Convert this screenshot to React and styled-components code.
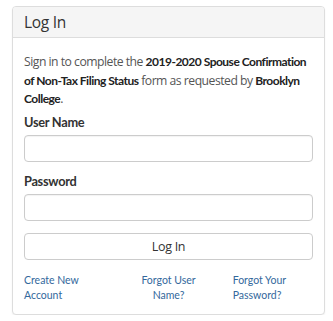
import React from 'react';
import styled, { createGlobalStyle } from 'styled-components';

const GlobalStyle = createGlobalStyle`
  body {
    margin: 0;
    background: #fff;
    font-family: "Open Sans", "Liberation Sans", sans-serif;
    color: #333;
  }
`;

const Page = styled.div`
  padding: 6px 8px 0 12px;
`;

const Panel = styled.section`
  width: 313px;
  box-sizing: border-box;
  border: 1px solid #ddd;
  border-radius: 4px;
  box-shadow: 0 1px 2px rgba(0, 0, 0, 0.06);
  background: #fff;
`;

const Heading = styled.h3`
  margin: 0;
  height: 31px;
  box-sizing: border-box;
  padding: 0 11px;
  display: flex;
  align-items: center;
  background: #f5f5f5;
  border-bottom: 1px solid #ddd;
  border-radius: 3px 3px 0 0;
  font-size: 15.5px;
  letter-spacing: -0.3px;
  font-weight: 400;
  color: #333;
`;

const Body = styled.div`
  padding: 15px 11px 11px 11px;
`;

const Intro = styled.p`
  margin: 0 0 4px;
  font-size: 12.2px;
  line-height: 18.5px;
  letter-spacing: -0.5px;
  color: #555;

  strong {
    font-family: Lato, "Open Sans", sans-serif;
    font-size: 12px;
    font-weight: 700;
    letter-spacing: -0.5px;
    color: #222;
  }
`;

const Label = styled.label`
  display: block;
  font-family: Lato, "Open Sans", sans-serif;
  font-weight: 700;
  font-size: 12.8px;
  line-height: 19px;
  letter-spacing: -0.3px;
  color: #333;
  margin-bottom: 3px;
`;

const Input = styled.input`
  display: block;
  width: 100%;
  height: 27px;
  box-sizing: border-box;
  border: 1px solid #ccc;
  border-radius: 4px;
  box-shadow: inset 0 1px 1px rgba(0, 0, 0, 0.05);
  margin: 0 0 ${p => p.$gap}px;
`;

const Button = styled.button`
  display: block;
  width: 100%;
  height: 27px;
  box-sizing: border-box;
  border: 1px solid #ccc;
  border-radius: 4px;
  background: #fff;
  font-family: "Open Sans", sans-serif;
  font-size: 12.5px;
  letter-spacing: -0.3px;
  color: #333;
  margin-bottom: 13px;
`;

const Links = styled.div`
  display: grid;
  grid-template-columns: 1fr 1fr 1fr;
`;

const LinkCell = styled.a`
  font-family: Lato, "Open Sans", sans-serif;
  font-size: 10.5px;
  line-height: 15px;
  color: #33689c;
  text-decoration: none;
  text-align: ${p => p.$align};
  padding-left: ${p => p.$indent}px;
`;

const App = () => (
  <Page>
    <GlobalStyle />
    <Panel>
      <Heading>Log In</Heading>
      <Body>
        <Intro>
          Sign in to complete the <strong>2019-2020 Spouse Confirmation<br />of Non-Tax Filing Status</strong> form as
          requested by <strong>Brooklyn<br />College</strong>.
        </Intro>
        <Label>User Name</Label>
        <Input type="text" $gap={10} />
        <Label>Password</Label>
        <Input type="password" $gap={12} />
        <Button>Log In</Button>
        <Links>
          <LinkCell href="#" $align="left" $indent={0}>Create New<br />Account</LinkCell>
          <LinkCell href="#" $align="center" $indent={0}>Forgot User<br />Name?</LinkCell>
          <LinkCell href="#" $align="left" $indent={16}>Forgot Your<br />Password?</LinkCell>
        </Links>
      </Body>
    </Panel>
  </Page>
);

export default App;
